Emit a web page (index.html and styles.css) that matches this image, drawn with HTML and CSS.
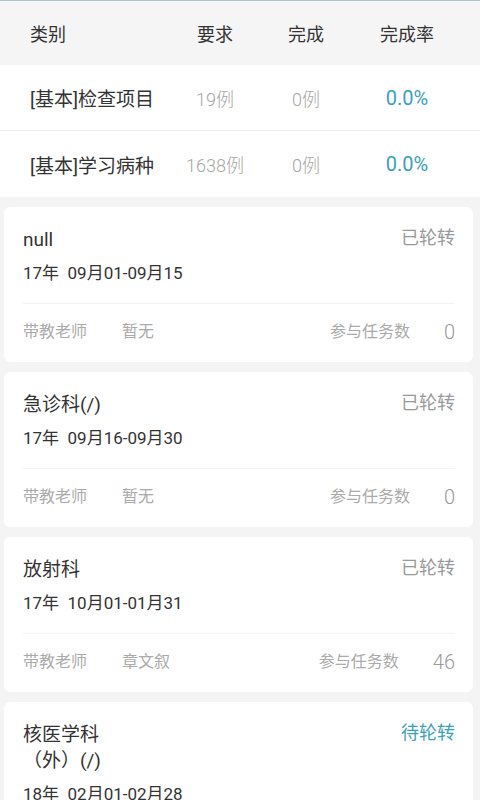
FILE: index.html
```html
<!DOCTYPE html>
<html lang="zh-CN">
<head>
<meta charset="utf-8">
<title>轮转</title>
<link rel="stylesheet" href="styles.css">
</head>
<body>
<div class="table">
  <div class="row head">
    <div class="c1">类别</div>
    <div class="c2">要求</div>
    <div class="c3">完成</div>
    <div class="c4">完成率</div>
  </div>
  <div class="row body">
    <div class="c1 cat">[基本]检查项目</div>
    <div class="c2 num">19例</div>
    <div class="c3 num">0例</div>
    <div class="c4 rate">0.0%</div>
  </div>
  <div class="row body last">
    <div class="c1 cat">[基本]学习病种</div>
    <div class="c2 num">1638例</div>
    <div class="c3 num">0例</div>
    <div class="c4 rate">0.0%</div>
  </div>
</div>

<div class="list">
  <div class="card">
    <div class="top">
      <div class="title">null</div>
      <div class="status">已轮转</div>
    </div>
    <div class="date">17年&nbsp; 09月01-09月15</div>
    <div class="foot">
      <span class="label">带教老师</span><span class="val">暂无</span>
      <span class="spacer"></span>
      <span class="label">参与任务数</span><span class="count">0</span>
    </div>
  </div>

  <div class="card">
    <div class="top">
      <div class="title">急诊科(/)</div>
      <div class="status">已轮转</div>
    </div>
    <div class="date">17年&nbsp; 09月16-09月30</div>
    <div class="foot">
      <span class="label">带教老师</span><span class="val">暂无</span>
      <span class="spacer"></span>
      <span class="label">参与任务数</span><span class="count">0</span>
    </div>
  </div>

  <div class="card">
    <div class="top">
      <div class="title">放射科</div>
      <div class="status">已轮转</div>
    </div>
    <div class="date">17年&nbsp; 10月01-01月31</div>
    <div class="foot">
      <span class="label">带教老师</span><span class="val">章文叙</span>
      <span class="spacer"></span>
      <span class="label">参与任务数</span><span class="count">46</span>
    </div>
  </div>

  <div class="card">
    <div class="top">
      <div class="title narrow">核医学科（外）(/)</div>
      <div class="status pending">待轮转</div>
    </div>
    <div class="date">18年&nbsp; 02月01-02月28</div>
    <div class="foot">
      <span class="label">带教老师</span><span class="val">暂无</span>
      <span class="spacer"></span>
      <span class="label">参与任务数</span><span class="count">0</span>
    </div>
  </div>
</div>
</body>
</html>
```

FILE: styles.css
```css
html, body {
  margin: 0;
  padding: 0;
}
body {
  background: #f4f4f4;
  font-family: Roboto, "Noto Sans CJK SC", sans-serif;
  color: #333;
  width: 480px;
  height: 800px;
  overflow: hidden;
}
.table {
  border-top: 1px solid #a9c3d3;
}
.row {
  display: grid;
  grid-template-columns: 170px 90px 92px 110px;
  align-items: center;
}
.row > div {
  text-align: center;
  white-space: nowrap;
}
.row > .c1 {
  text-align: left;
  padding-left: 30px;
}
.head {
  height: 64px;
  background: #f5f5f5;
  font-size: 18px;
  color: #333;
}
.body {
  height: 65px;
  background: #fff;
  border-bottom: 1px solid #f0f0f0;
  font-size: 18px;
}
.body.last {
  border-bottom: none;
  height: 66px;
}
.cat {
  font-size: 19px;
  color: #333;
}
.num {
  color: #a6a6a6;
  font-weight: 300;
}
.rate {
  color: #3aa2b8;
  font-size: 20px;
}
.list {
  padding: 10px 7px 0 4px;
  display: flex;
  flex-direction: column;
  gap: 10px;
}
.card {
  background: #fff;
  border-radius: 6px;
  padding: 20px 18px 20px 19px;
}
.top {
  display: flex;
  justify-content: space-between;
  align-items: flex-start;
}
.title {
  font-size: 19px;
  line-height: 26px;
  color: #333;
}
.title.narrow {
  max-width: 88px;
}
.status {
  font-size: 18px;
  line-height: 22px;
  color: #999;
}
.status.pending {
  color: #3aa2b8;
}
.date {
  margin-top: 10px;
  font-size: 17px;
  line-height: 20px;
  color: #333;
  padding-bottom: 20px;
  border-bottom: 1px solid #f2f2f2;
}
.foot {
  display: flex;
  align-items: center;
  padding-top: 18px;
  font-size: 16px;
  line-height: 20px;
  color: #aaa;
}
.label {
  color: #aaa;
}
.val {
  margin-left: 35px;
  color: #aaa;
}
.spacer {
  flex: 1;
}
.count {
  margin-left: 34px;
  font-size: 20px;
  color: #999;
  font-weight: 300;
}
```
